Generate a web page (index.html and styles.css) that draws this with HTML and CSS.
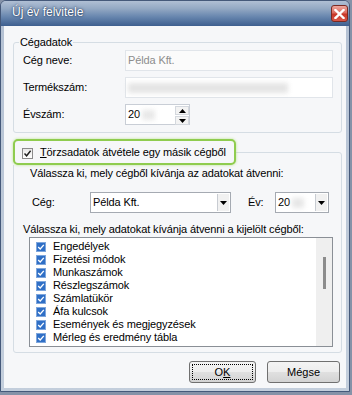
FILE: index.html
```html
<!DOCTYPE html>
<html lang="hu">
<head>
<meta charset="utf-8">
<title>Új év felvitele</title>
<link rel="stylesheet" href="styles.css">
</head>
<body>
<div class="window">
  <div class="titlebar">
    <span class="title">Új év felvitele</span>
    <span class="close"><svg width="11" height="10" viewBox="0 0 11 10"><path d="M1.5 1 L9.5 9 M9.5 1 L1.5 9" stroke="#fff" stroke-width="2.4" stroke-linecap="square"/></svg></span>
  </div>
  <div class="client">
    <fieldset class="group g1">
      <legend>Cégadatok</legend>
      <div class="row"><span class="lbl">Cég neve:</span><div class="input disabled">Példa Kft.</div></div>
      <div class="row"><span class="lbl">Termékszám:</span><div class="input"><span class="blur wide"></span></div></div>
      <div class="row"><span class="lbl">Évszám:</span><div class="input year">20<span class="blur short"></span><span class="spin"><span class="sb"><svg width="7" height="4" viewBox="0 0 7 4"><path d="M0 4 L3.5 0 L7 4Z" fill="#000"/></svg></span><span class="sb"><svg width="7" height="4" viewBox="0 0 7 4"><path d="M0 0 L7 0 L3.5 4Z" fill="#000"/></svg></span></span></div></div>
    </fieldset>
    <fieldset class="group g2">
      <legend class="hl"><span class="cb"><svg width="9" height="9" viewBox="0 0 9 9"><path d="M1.5 4.5 L3.6 6.8 L7.6 1.8" fill="none" stroke="#1e1e1e" stroke-width="1.4"/></svg></span><span><u>T</u>örzsadatok átvétele egy másik cégből</span></legend>
      <p class="hint1">Válassza ki, mely cégből kívánja az adatokat átvenni:</p>
      <div class="comborow">
        <span class="clbl">Cég:</span>
        <div class="combo company"><span class="ctext">Példa Kft.</span><span class="dd"><svg width="7" height="4" viewBox="0 0 7 4"><path d="M0 0 L7 0 L3.5 4Z" fill="#000"/></svg></span></div>
        <span class="elbl">Év:</span>
        <div class="combo yearc"><span class="ctext">20<span class="blur tiny"></span></span><span class="dd"><svg width="7" height="4" viewBox="0 0 7 4"><path d="M0 0 L7 0 L3.5 4Z" fill="#000"/></svg></span></div>
      </div>
      <p class="hint2">Válassza ki, mely adatokat kívánja átvenni a kijelölt cégből:</p>
      <div class="list">
        <ul class="items">
          <li><span class="lcb"></span>Engedélyek</li>
          <li><span class="lcb"></span>Fizetési módok</li>
          <li><span class="lcb"></span>Munkaszámok</li>
          <li><span class="lcb"></span>Részlegszámok</li>
          <li><span class="lcb"></span>Számlatükör</li>
          <li><span class="lcb"></span>Áfa kulcsok</li>
          <li><span class="lcb"></span>Események és megjegyzések</li>
          <li><span class="lcb"></span>Mérleg és eredmény tábla</li>
        </ul>
        <div class="vscroll"><span class="thumb"></span></div>
      </div>
    </fieldset>
    <div class="buttons">
      <button class="btn ok"><span class="focus">O<u>K</u></span></button>
      <button class="btn cancel">Mégse</button>
    </div>
  </div>
</div>
</body>
</html>
```
FILE: styles.css
```css
* { box-sizing: border-box; }
html, body { margin: 0; padding: 0; }
body {
  width: 352px;
  height: 395px;
  overflow: hidden;
  background: #8592a8;
  font-family: "Liberation Sans", Arial, sans-serif;
  font-size: 11px;
  line-height: 13px;
  letter-spacing: -0.12px;
  color: #000;
}
.window {
  width: 350px;
  height: 392px;
  border: 1px solid #45597a;
  border-radius: 6px 6px 0 0;
  background: linear-gradient(#b4c1d3, #c3cedc);
  display: flex;
  flex-direction: column;
}
.titlebar {
  flex: none;
  height: 25px;
  display: flex;
  align-items: center;
  justify-content: space-between;
  padding: 0 1px 2px 11px;
  border-radius: 5px 5px 0 0;
  background: linear-gradient(to bottom, #b0bfd4 0%, #94a9c4 30%, #6584ad 65%, #3e5f8f 100%);
}
.title {
  color: #fff;
  font-size: 12px;
  letter-spacing: 0;
  text-shadow: 0 0 3px #22395e, 0 0 1px #22395e;
}
.close {
  width: 17px;
  height: 17px;
  margin-top: 2px;
  display: flex;
  align-items: center;
  justify-content: center;
  border: 1px solid #7b2a22;
  border-radius: 3px;
  background: linear-gradient(#eea79e 0%, #dc6b5f 45%, #c83626 55%, #d9584a 100%);
}
.client {
  flex: 1;
  margin: 0 3px 3px;
  background: #f6f7f9;
  display: flex;
  flex-direction: column;
  padding: 10px 4px 0 9px;
}
.group {
  margin: 0;
  min-width: 0;
  border: 1px solid #d5dde4;
  border-radius: 3px;
}
.g1 { padding: 1px 8px 7px 9px; }
.g1 legend { padding: 0 1px; margin-left: -4px; }
.row { display: flex; align-items: center; height: 21px; }
.row + .row { margin-top: 6px; }
.lbl { width: 102px; flex: none; }
.input {
  flex: 1;
  height: 21px;
  border: 1px solid #e1e5ea;
  background: #fff;
  display: flex;
  align-items: center;
  padding-left: 2px;
}
.input.disabled { background: #fbfbfb; color: #8d8d8d; }
.input.year { flex: none; width: 65px; position: relative; border-color: #c9ced6; }
.blur { display: inline-block; background: #d9d9d9; filter: blur(2.5px); height: 10px; }
.blur.wide { width: 160px; background: #e4e4e4; }
.blur.short { width: 13px; margin-left: 2px; background: #e8e8e8; }
.blur.tiny { width: 12px; margin-left: 2px; background: #e6e6e6; vertical-align: middle; }
.spin {
  position: absolute;
  right: 0;
  top: 1px;
  display: flex;
  flex-direction: column;
  gap: 1px;
}
.sb {
  width: 14px;
  height: 9px;
  border: 1px solid #d4d8de;
  background: #f3f3f3;
  display: flex;
  align-items: center;
  justify-content: center;
}
.g2 { margin-top: 6px; padding: 0 8px 5px 0; }
.hl {
  margin-left: -1px;
  height: 26px;
  padding: 0 8px 0 7px;
  display: flex;
  align-items: center;
  border: 2px solid #8fcc4f;
  border-radius: 5px;
  box-shadow: 0 0 3px #b9e28e;
  background: #f6f7f9;
}
.cb {
  width: 11px;
  height: 11px;
  margin: 2px 7px 0 0;
  border: 1px solid #8b8b8b;
  background: linear-gradient(#e9e9e9, #ffffff);
  display: flex;
  align-items: center;
  justify-content: center;
}
.hint1 { margin: 2px 0 0 16px; }
.comborow { display: flex; align-items: center; margin-top: 12px; height: 21px; }
.clbl { width: 58px; margin-left: 18px; }
.elbl { width: 27px; margin-left: 17px; }
.combo {
  height: 21px;
  border: 1px solid #a5aab2;
  background: #fff;
  display: flex;
  align-items: center;
  justify-content: space-between;
  padding-left: 2px;
}
.company { width: 141px; }
.yearc { width: 54px; }
.dd {
  width: 12px;
  height: 17px;
  margin-right: 1px;
  border-left: 1px solid #c8ccd2;
  background: #f1f1f1;
  display: flex;
  align-items: center;
  justify-content: center;
}
.hint2 { margin: 10px 0 0 9px; }
.list {
  margin: 1px 0 0 15px;
  height: 110px;
  border: 1px solid #8a8f96;
  background: #fff;
  display: flex;
}
.items {
  flex: 1;
  list-style: none;
  margin: 0;
  padding: 2px 0 0 6px;
}
.items li { height: 13px; display: flex; align-items: center; }
.lcb {
  width: 10px;
  height: 10px;
  margin-right: 7px;
  border: 1px solid #7ea6dc;
  background: #2f6fc6 url("data:image/svg+xml,%3Csvg xmlns='http://www.w3.org/2000/svg' width='8' height='8'%3E%3Cpath d='M1.2 4 L3.2 6 L6.8 1.8' fill='none' stroke='white' stroke-width='1.3'/%3E%3C/svg%3E") center/8px 8px no-repeat;
}
.vscroll {
  width: 16px;
  background: #efefef;
  display: flex;
  justify-content: center;
  padding-top: 19px;
}
.thumb { width: 3px; height: 32px; background: #8c8c8c; }
.buttons {
  display: flex;
  justify-content: flex-end;
  gap: 11px;
  margin-top: 8px;
  padding-right: 2px;
}
.btn {
  height: 22px;
  padding: 0;
  font: inherit;
  color: #000;
  border: 1px solid #707070;
  border-radius: 3px;
  background: linear-gradient(#f4f4f4 0%, #ededed 50%, #e0e0e0 51%, #d3d3d3 100%);
  display: flex;
  align-items: center;
  justify-content: center;
}
.ok { width: 67px; padding: 2px; }
.cancel { width: 73px; }
.focus {
  width: 100%;
  height: 100%;
  border: 1px dotted #000;
  display: flex;
  align-items: center;
  justify-content: center;
}
```
